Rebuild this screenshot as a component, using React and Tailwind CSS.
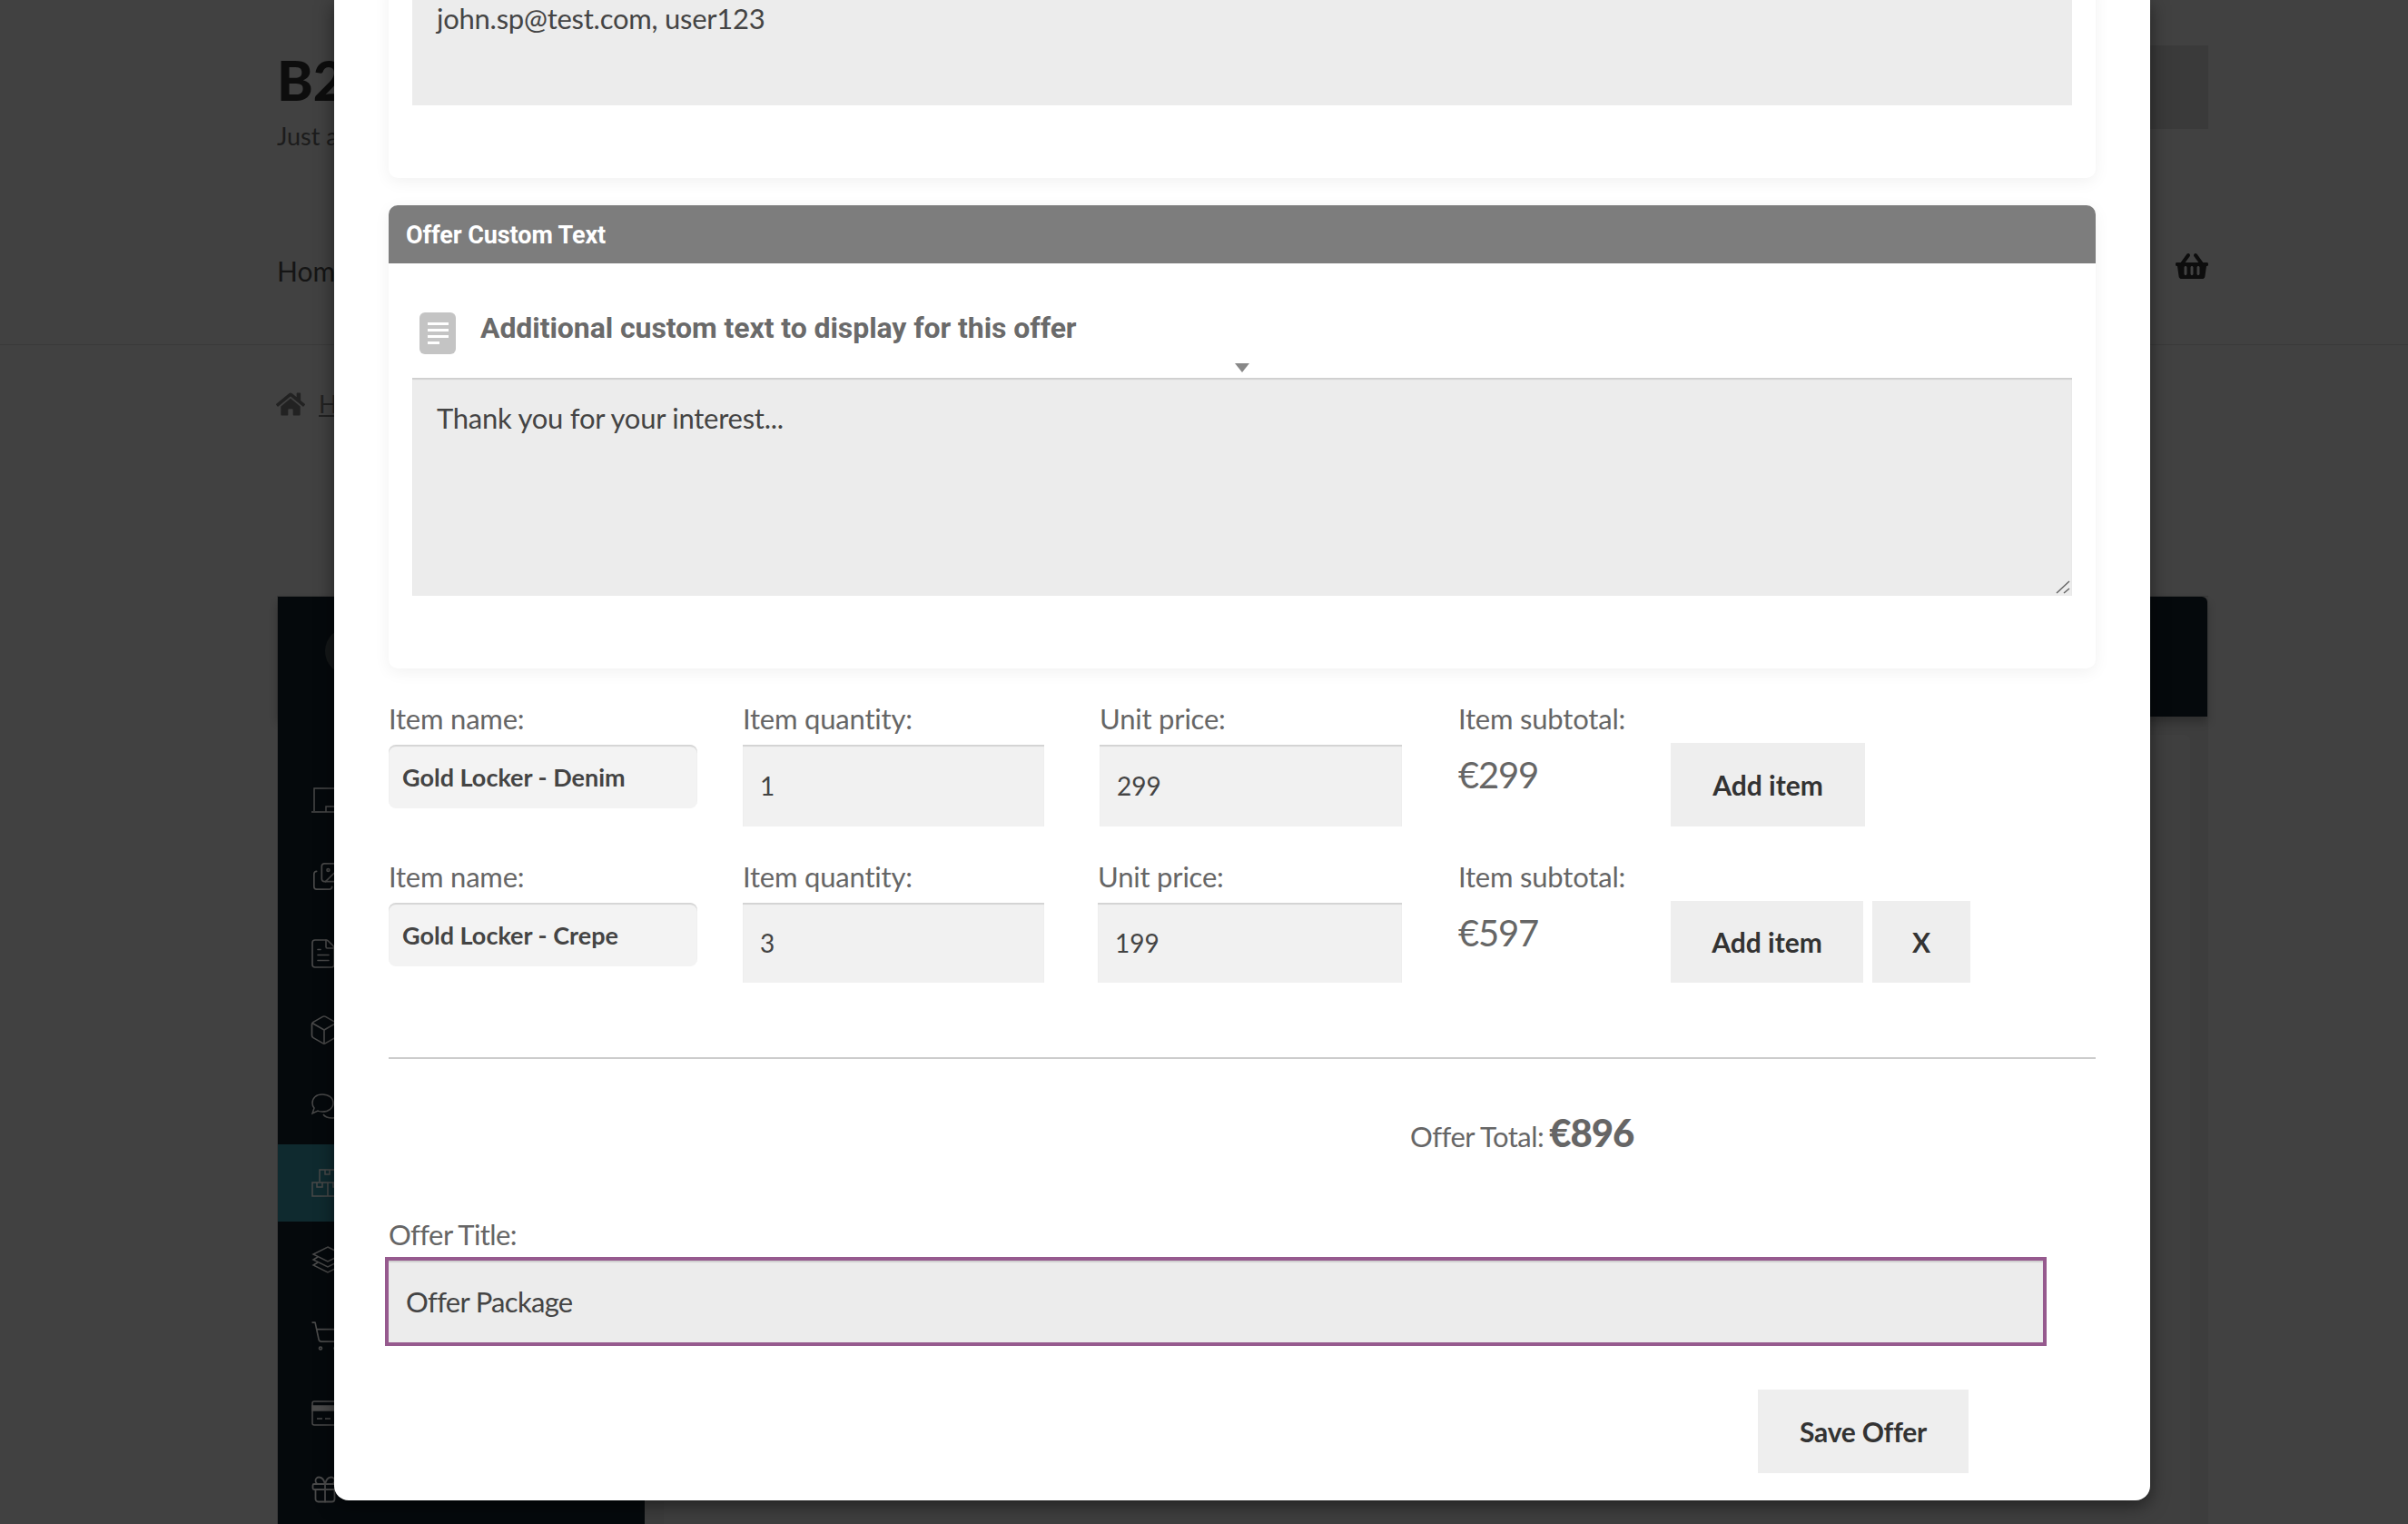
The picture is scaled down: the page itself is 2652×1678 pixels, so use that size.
import React from "react";
import { Images, FileText, Box, ShoppingCart, Gift } from "lucide-react";
import { FaHome, FaShoppingBasket } from "react-icons/fa";

const sans = "font-['Lato','Liberation_Sans',sans-serif]";
const robo = "font-['Roboto','Liberation_Sans',sans-serif]";
const labelCls = "h-[50px] pt-[3px] text-[31px] leading-[36px] tracking-[-0.2px] text-[#666]";

function LaptopIcon() {
  return (
    <svg width="36" height="30" viewBox="0 0 36 30" fill="none" stroke="#4a4a4a" strokeWidth="1.5">
      <path d="M3 27V2h28v25M0 28h36M16 28v-6h14v6" />
    </svg>
  );
}

function BoxesIcon() {
  return (
    <svg width="36" height="32" viewBox="0 0 36 32" fill="none" stroke="#4a4a4a" strokeWidth="1.5">
      <path d="M9 14V1h18v13M15 1v5h5V1M1 15h17v15H1zM18 15h17v15H18zM6 15v5h6v-5M24 15v5h6v-5" />
    </svg>
  );
}

function ChatIcon() {
  return (
    <svg width="36" height="28" viewBox="0 0 36 28" fill="none" stroke="#4a4a4a" strokeWidth="1.5">
      <path d="M12 1c7 0 12 4 12 9.5S19 20 12 20c-2 0-4-.3-5-1l-6 3 2-6C1.500 14.500 1 12.500 1 10.500 1 5 5 1 12 1z" />
      <path d="M13 23c2 3 6 4 10 4 2 0 4-.4 5-1l6 2-2-6c1-1 2-3 2-5" />
    </svg>
  );
}

function StackIcon() {
  return (
    <svg width="36" height="30" viewBox="0 0 36 30" fill="none" stroke="#4a4a4a" strokeWidth="1.5">
      <path d="M18 1 34 9l-16 8L2 9z" />
      <path d="M7 12 2 15l16 8 16-8-5-3" />
      <path d="M7 18l-5 3 16 8 16-8-5-3" />
    </svg>
  );
}

function CardIcon() {
  return (
    <svg width="36" height="28" viewBox="0 0 36 28" fill="none" stroke="#4a4a4a" strokeWidth="1.5">
      <rect x="1" y="1" width="34" height="26" rx="2" />
      <rect x="1" y="6" width="34" height="5" fill="#4a4a4a" />
      <path d="M6 20h6M15 20h6" />
    </svg>
  );
}

const navIcons = [
  <LaptopIcon />,
  <Images size={34} strokeWidth={1.2} color="#4a4a4a" />,
  <FileText size={36} strokeWidth={1.1} color="#4a4a4a" className="-ml-[5px]" />,
  <Box size={36} strokeWidth={1.1} color="#4a4a4a" className="-ml-[4px]" />,
  <ChatIcon />,
  <BoxesIcon />,
  <StackIcon />,
  <ShoppingCart size={36} strokeWidth={1.1} color="#4a4a4a" className="-ml-[2px]" />,
  <CardIcon />,
  <Gift size={36} strokeWidth={1.2} color="#4a4a4a" className="-ml-[3px]" />,
];

function Background() {
  return (
    <div className={`${sans} h-[1678px] bg-[#414141] text-[#111]`}>
      <div className="h-[380px] border-b border-b-[#3a3a3a] pl-[305px] pr-[220px]">
        <div className="flex justify-between pt-[50px]">
          <div>
            <div className="text-[60px] leading-[76px] font-black text-[#0d0d0d]">B2B</div>
            <div className="mt-[7px] text-[27px] leading-[34px] text-[#1c1c1c]">Just another site</div>
          </div>
          <div className="h-[92px] w-[800px] bg-[#3a3a3a]" />
        </div>
        <div className="mt-[111px] flex items-center justify-between">
          <div className="text-[30px] leading-[40px] text-[#151515]">Home</div>
          <FaShoppingBasket size={36} color="#0d0d0d" className="-mt-[10px]" />
        </div>
      </div>
      <div className="flex h-[100px] items-center gap-[15px] pl-[304px] pt-[30px]">
        <FaHome size={32} color="#222" />
        <span className="text-[27px] text-[#222] underline">Home</span>
      </div>
      <div className="relative ml-[305px] mt-[176px] h-[1022px] w-[2127px] border-l border-t border-[#383838] bg-[#3d3d3d]">
        <div className="h-[132px] w-[2125px] rounded-t-[6px] bg-[#05090c] shadow-[0_6px_10px_rgba(0,0,0,0.25)]" />
        <div className="absolute left-[425px] right-[20px] top-[152px] bottom-0 rounded-t-[6px] bg-[#3f3f3f]" />
        <div className="absolute left-0 top-0 h-[1022px] w-[404px] bg-[#05090c] pl-[37px] pt-[182px]">
          {navIcons.map((icon, i) => (
            <div key={i} className={`-ml-[37px] flex h-[84.3px] items-center pl-[37px] ${i === 5 ? "bg-[#0f2a2f]" : ""}`}>
              {icon}
            </div>
          ))}
        </div>
        <div className="absolute left-[52px] top-[34px] h-[52px] w-[52px] rounded-full bg-[#141718]" />
      </div>
    </div>
  );
}

const inputBase = "block border-0 outline-none shadow-[inset_0_2px_1px_rgba(0,0,0,0.12)]";

function Card({ children, className = "" }) {
  return (
    <div className={`w-[1880px] rounded-[10px] bg-white shadow-[0_4px_18px_rgba(0,0,0,0.06)] ${className}`}>{children}</div>
  );
}

function Field({ label, width, value, ml, height }) {
  return (
    <div style={{ width, marginLeft: ml }}>
      <div className={labelCls}>{label}</div>
      <input readOnly value={value} style={{ height }} className={`${inputBase} w-full bg-[#f1f1f1] px-[19px] text-[28px] text-[#444]`} />
    </div>
  );
}

function Row({ name, qty, price, total, btnW, btnH, inH, showX, unitMl, className = "" }) {
  return (
    <div className={`flex items-start ${className}`}>
      <div className="w-[340px]">
        <div className={labelCls}>Item name:</div>
        <input readOnly value={name} className={`${inputBase} h-[70px] w-full rounded-[8px] bg-[#f3f3f3] px-[15px] text-[27px] font-bold text-[#444]`} />
      </div>
      <Field label="Item quantity:" width={332} value={qty} ml={50} height={inH} />
      <Field label="Unit price:" width={333 + (61 - unitMl)} value={price} ml={unitMl} height={inH} />
      <div className="ml-[62px] w-[234px]">
        <div className={labelCls}>Item subtotal:</div>
        <div className="mt-[8px] text-[40px] leading-[50px] tracking-[-1.2px] text-[#666]">{total}</div>
      </div>
      <div className="mt-[48px] flex gap-[10px]">
        <button style={{ width: btnW, height: btnH }} className="bg-[#eeeeee] text-[30px] font-bold text-[#333]">Add item</button>
        {showX && <button style={{ height: btnH }} className="w-[108px] bg-[#eeeeee] text-[30px] font-bold text-[#333]">X</button>}
      </div>
    </div>
  );
}

function DocIcon() {
  return (
    <svg width="40" height="46" viewBox="0 0 40 46">
      <rect width="40" height="46" rx="6" fill="#c4c4c4" />
      <path d="M9 11h23v3H9zM9 18h23v3H9zM9 25h23v3H9zM9 32h13v3H9z" fill="#fff" />
    </svg>
  );
}

function Modal() {
  return (
    <div className={`${sans} absolute left-[368px] top-0 h-[1652px] w-[2000px] rounded-b-[16px] bg-white pl-[60px] shadow-[0_5px_20px_rgba(0,0,0,0.5)]`}>
      <Card className="-mt-[24px] px-[26px] pb-[80px]">
        <textarea readOnly value="john.sp@test.com, user123" className="block h-[140px] w-full resize-none bg-[#ececec] px-[27px] pt-[26px] text-[31px] leading-[36px] tracking-[-0.25px] text-[#444] outline-none" />
      </Card>
      <Card className="mt-[30px]">
        <div className={`${robo} h-[64px] rounded-t-[10px] bg-[#7d7d7d] px-[19px] text-[27px] font-bold leading-[66px] tracking-[-0.1px] text-white`}>
          Offer Custom Text
        </div>
        <div className="relative flex h-[126px] items-start pl-[34px] pt-[54px]">
          <DocIcon />
          <div className={`${robo} -mt-[7px] ml-[27px] text-[32px] font-bold leading-[48px] tracking-[-0.08px] text-[#6a6a6a]`}>
            Additional custom text to display for this offer
          </div>
          <div className="absolute left-[932px] top-[110px] h-0 w-0 border-x-[8px] border-t-[10px] border-x-transparent border-t-[#888]" />
        </div>
        <div className="px-[26px] pb-[80px]">
          <div className="relative">
            <textarea readOnly value="Thank you for your interest..." className={`${inputBase} h-[240px] w-full resize-none bg-[#ececec] px-[27px] pt-[26px] text-[31px] leading-[36px] tracking-[-0.25px] text-[#444]`} />
            <svg width="16" height="16" viewBox="0 0 16 16" className="absolute bottom-[2px] right-[2px]" fill="none" stroke="#666" strokeWidth="1.5">
              <path d="M1 15 15 2M9 15l6-5" />
            </svg>
          </div>
        </div>
      </Card>
      <Row className="mt-[34px]" name="Gold Locker - Denim" qty="1" price="299" total="€299" btnW={214} btnH={92} inH={90} unitMl={61} />
      <Row className="mt-[34px]" name="Gold Locker - Crepe" qty="3" price="199" total="€597" btnW={212} btnH={90} inH={88} showX unitMl={59} />
      <div className="mt-[82px] h-[2px] w-[1880px] bg-[#cccccc]" />
      <div className="mt-[50px] flex h-[62px] items-baseline pl-[1125px] text-[#666]">
        <span className="text-[31px] tracking-[-0.5px]">Offer Total:</span>
        <span className="ml-[6px] text-[42px] font-black tracking-[-1.1px]">€896</span>
      </div>
      <div className="mt-[61px] h-[45px] pt-[2px] text-[31px] leading-[36px] tracking-[-0.6px] text-[#666]">Offer Title:</div>
      <input readOnly value="Offer Package" className="-ml-[4px] block h-[98px] w-[1830px] border-[4px] border-[#965a8e] bg-[#ececec] px-[19px] text-[31px] tracking-[-0.7px] text-[#444] shadow-[inset_0_2px_1px_rgba(0,0,0,0.12)] outline-none" />
      <div className="mt-[48px] pl-[1508px]">
        <button className="h-[92px] w-[232px] bg-[#eeeeee] text-[30px] font-bold tracking-[-0.2px] text-[#333]">Save Offer</button>
      </div>
    </div>
  );
}

export default function App() {
  return (
    <div className="relative h-[1678px] w-[2652px] overflow-hidden">
      <Background />
      <Modal />
    </div>
  );
}
